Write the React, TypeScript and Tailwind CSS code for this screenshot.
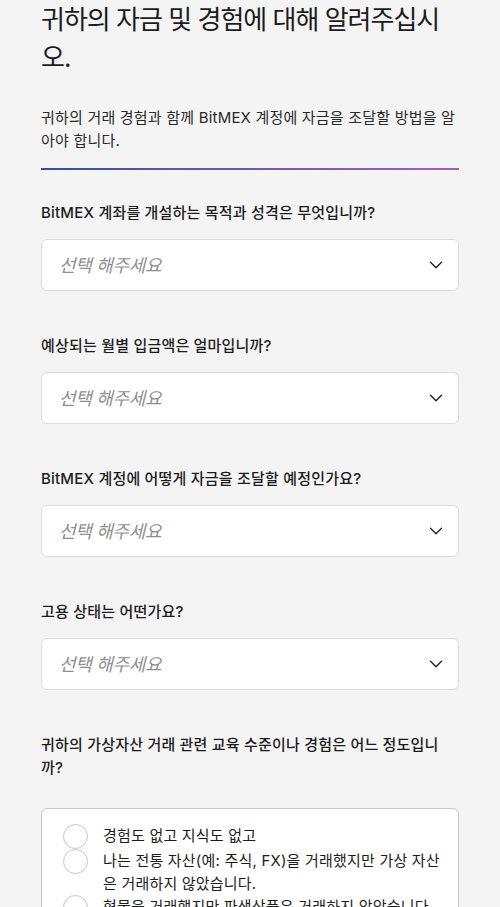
import { ChevronDown } from 'lucide-react'

const SELECT_QUESTIONS = [
  'BitMEX 계좌를 개설하는 목적과 성격은 무엇입니까?',
  '예상되는 월별 입금액은 얼마입니까?',
  'BitMEX 계정에 어떻게 자금을 조달할 예정인가요?',
  '고용 상태는 어떤가요?',
]

const EXPERIENCE_OPTIONS = [
  '경험도 없고 지식도 없고',
  '나는 전통 자산(예: 주식, FX)을 거래했지만 가상 자산은 거래하지 않았습니다.',
  '현물을 거래했지만 파생상품은 거래하지 않았습니다.',
  '가상자산 파생상품을 거래한 경험이 있습니다.',
]

function SelectField({ label }: { label: string }) {
  return (
    <div className="mb-[43px]">
      <p className="text-[15px] leading-[23px] font-medium tracking-[0.2px] text-[#1c1c1c]">{label}</p>
      <button
        type="button"
        className="mt-[15px] flex h-[52px] w-full items-center justify-between rounded-md border border-[#dcdcdc] bg-white pl-[17px] pr-[11px]"
      >
        <span className="text-[18px] italic tracking-[-0.3px] text-[#8f8f8f]">선택 해주세요</span>
        <ChevronDown size={22} strokeWidth={1.5} className="text-[#222]" />
      </button>
    </div>
  )
}

export default function App() {
  return (
    <div className="min-h-screen bg-[#f4f4f4] px-[41px] pt-px font-['Inter','Noto_Sans_CJK_KR',sans-serif] text-[#1c1c1c]">
      {/* Header */}
      <h1 className="text-[26px] leading-[38px] font-normal tracking-[-1px]">
        귀하의 자금 및 경험에 대해 알려주십시오.
      </h1>
      <p className="mt-[29px] text-[15px] leading-[23px] tracking-[0.2px] text-[#2a2a2a]">
        귀하의 거래 경험과 함께 BitMEX 계정에 자금을 조달할 방법을 알아야 합니다.
      </p>
      <div className="mt-4 h-[2px] w-full bg-gradient-to-r from-[#2f4fa4] to-[#a45bc9]" />

      <div className="mt-[31px]">
        {SELECT_QUESTIONS.map((q) => (
          <SelectField key={q} label={q} />
        ))}

        {/* Experience */}
        <p className="text-[15px] leading-[23px] font-medium tracking-[0.2px] text-[#1c1c1c]">
          귀하의 가상자산 거래 관련 교육 수준이나 경험은 어느 정도입니까?
        </p>
        <div className="mt-[29px] rounded-md border border-[#c4c7cc] bg-white pl-[21px] pr-[16px] pt-[15px] pb-4">
          {EXPERIENCE_OPTIONS.map((opt) => (
            <label key={opt} className="flex items-start gap-[15px]">
              <span className="h-[25px] w-[25px] shrink-0 rounded-full border-[1.5px] border-[#c6c6c6] bg-white" />
              <span className="text-[15px] leading-[23px] tracking-[0.2px] text-[#1c1c1c]">{opt}</span>
            </label>
          ))}
        </div>
      </div>
    </div>
  )
}
